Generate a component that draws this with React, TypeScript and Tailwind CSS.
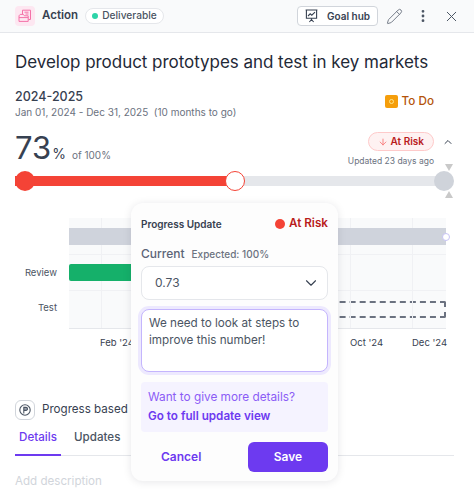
import { ChevronDown, ChevronUp, ArrowDown, Pencil, EllipsisVertical, X } from 'lucide-react';

const FONT = 'font-["Inter",sans-serif]';

function ActionIcon() {
  return (
    <div className="w-5 h-5 rounded bg-[#fde7f1] flex items-center justify-center">
      <svg width="14" height="14" viewBox="0 0 14 14" fill="none" stroke="#f472a8" strokeWidth="1">
        <path d="M4.5 5V1.2h8v9.3h-2" />
        <path d="M6.5 3.2h4M7.5 5h3" />
        <path d="M1 6.8V12.4h9.2V6.8H6.4L5.4 5.4H2.2L1 6.8Z" />
        <path d="M1 8.6h9.2" />
      </svg>
    </div>
  );
}

function HubIcon() {
  return (
    <svg width="13" height="14" viewBox="0 0 13 14" fill="none" stroke="#374151" strokeWidth="1.1">
      <path d="M.6 1h11.8M1.4 1v8.2h10.2V1" />
      <path d="M3 7l2.2-2.2 1.6 1.4L10 3.2" />
      <path d="M6.5 9.2v1.3M4.4 13l2.1-2.5L8.6 13" />
    </svg>
  );
}

function ProgressIcon() {
  return (
    <div className="w-5 h-5 rounded-md border border-[#d1d5db] flex items-center justify-center">
      <svg width="12" height="12" viewBox="0 0 12 12" fill="none" stroke="#4b5563" strokeWidth="1.1">
        <circle cx="6" cy="6" r="5.2" />
        <path d="M4.8 9.6V3.4h2.2a1.5 1.5 0 0 1 0 3H4.8" fill="#9ca3af" />
      </svg>
    </div>
  );
}

function Header() {
  return (
    <div className="h-[33px] bg-[#f9fafb] border-b border-[#e5e7eb] flex items-center pl-[15px] pr-[14px]">
      <ActionIcon />
      <span className="ml-[7px] text-[11.5px] font-semibold text-[#374151]">Action</span>
      <div className="ml-[7px] h-4 w-[79px] justify-center rounded-full border border-[#e5e7eb] bg-white flex items-center gap-[4px]">
        <span className="w-[6px] h-[6px] rounded-full bg-[#2dd4a8]" />
        <span className="text-[10.2px] font-medium text-[#4b5563]">Deliverable</span>
      </div>
      <div className="ml-auto h-5 w-[81px] rounded border border-[#d1d5db] bg-white flex items-center justify-center gap-[9px]">
        <HubIcon />
        <span className="text-[10px] font-semibold text-[#374151]">Goal hub</span>
      </div>
      <Pencil className="ml-2 w-[17px] h-[17px] text-[#6b7280]" strokeWidth={1.3} />
      <EllipsisVertical className="ml-[12px] w-4 h-4 text-[#4b5563]" strokeWidth={2.2} />
      <X className="ml-[12px] w-[17px] h-[17px] text-[#4b5563]" strokeWidth={1.4} />
    </div>
  );
}

function Summary() {
  return (
    <div className="px-[15px]">
      <h1 className="mt-[16px] text-[17px] tracking-[-0.04px] leading-[26px] font-normal text-[#1f2937] whitespace-nowrap">
        Develop product prototypes and test in key markets
      </h1>
      <div className="mt-[14px] flex items-start justify-between">
        <div>
          <div className="text-[12.5px] leading-[15px] font-medium text-[#374151]">2024-2025</div>
          <div className="text-[10px] leading-4 text-[#6b7280] whitespace-pre">Jan 01, 2024 - Dec 31, 2025  (10 months to go)</div>
        </div>
        <div className="mt-[4px] flex items-center gap-1 pr-[25px]">
          <span className="w-[13px] h-[13px] rounded-[2px] bg-[#f59e0b] flex items-center justify-center">
            <span className="w-[5px] h-[5px] rounded-full border border-[#fde68a]" />
          </span>
          <span className="text-[11.7px] font-medium text-[#b45309]">To Do</span>
        </div>
      </div>
      <div className="mt-[7px] flex items-start justify-between">
        <div className="flex items-baseline">
          <span className="text-[31px] leading-[42px] font-normal text-[#374151]">73</span>
          <span className="ml-[1px] text-[14px] text-[#374151]">%</span>
          <span className="ml-[6px] text-[10px] text-[#6b7280]">of 100%</span>
        </div>
        <div className="flex flex-col items-end pr-[25px] relative">
          <div className="mt-[5px] h-[19px] px-[9px] rounded-full border border-[#fecaca] bg-[#fef2f2] flex items-center gap-[3px]">
            <ArrowDown className="w-[10px] h-[10px] text-[#f87171]" strokeWidth={2} />
            <span className="text-[10px] font-semibold text-[#b91c1c]">At Risk</span>
          </div>
          <span className="mt-[4px] text-[8.5px] leading-3 text-[#6b7280]">Updated 23 days ago</span>
          <ChevronUp className="absolute right-[5px] top-[9px] w-[12px] h-[12px] text-[#374151]" strokeWidth={2} />
        </div>
      </div>
    </div>
  );
}

function ProgressBar() {
  return (
    <div className="relative ml-[15px] mr-[30px] mt-[2px] h-5 flex items-center">
      <div className="w-full h-[10px] rounded-full bg-[#e5e7eb]">
        <div className="w-[220px] h-full bg-[#f44336]" />
      </div>
      <span className="absolute left-0 top-0 w-5 h-5 rounded-full bg-[#f44336]" />
      <span className="absolute left-[210px] top-0 w-5 h-5 rounded-full bg-white border border-[#f44336]" />
      <span className="absolute right-[-10px] top-0 w-5 h-5 rounded-full bg-[#cfd3da]" />
      <span className="absolute right-[-9px] top-[-7px] w-0 h-0 border-x-[4px] border-x-transparent border-t-[7px] border-t-[#c9c9c9]" />
      <span className="absolute right-[-9px] bottom-[-7px] w-0 h-0 border-x-[4px] border-x-transparent border-b-[7px] border-b-[#c9c9c9]" />
    </div>
  );
}

function Chart() {
  return (
    <div className="mt-[27px] flex pl-[26px]">
      <div className="w-[43px] flex flex-col pr-[12px] items-end text-[9.5px] text-[#4b5563]">
        <div className="h-[37px]" />
        <div className="h-[36px] flex items-center">Review</div>
        <div className="h-[35px] flex items-center">Test</div>
      </div>
      <div>
        <div className="relative w-[377px] h-[111px] bg-[#f9fafb] border-b border-[#e5e7eb] flex flex-col">
          <div className="absolute left-[32px] top-0 bottom-0 w-px bg-[#f0f1f4]" />
          <div className="absolute left-[281px] top-0 bottom-0 w-px bg-[#f0f1f4]" />
          <div className="absolute left-[343px] top-0 bottom-0 w-px bg-[#f0f1f4]" />
          <div className="h-[37px] border-b border-[#f0f1f4] flex items-center relative">
            <div className="w-full h-[17px] bg-[#cfd3dc]" />
            <span className="absolute right-[-4px] top-[15px] w-[8px] h-[8px] rounded-full bg-white border border-[#c7c3f5]" />
          </div>
          <div className="h-9 border-b border-[#f0f1f4] flex items-center relative">
            <div className="w-[120px] h-[17px] rounded-l-[2px] bg-[#15b06a]" />
          </div>
          <div className="flex-1 flex items-center pl-[120px]">
            <div className="w-full h-[17px] rounded-[2px] border-2 border-dashed border-[#6b7280]" />
          </div>
        </div>
        <div className="relative h-[27px] text-[9.5px] text-[#374151]">
          <span className="absolute left-[31px] top-[7px]">Feb &apos;24</span>
          <span className="absolute left-[281px] top-[7px]">Oct &apos;24</span>
          <span className="absolute left-[343px] top-[7px] whitespace-nowrap">Dec &apos;24</span>
        </div>
      </div>
    </div>
  );
}

function Tabs() {
  return (
    <div className="pl-[15px] pr-[20px]">
      <div className="mt-[44px] flex items-center gap-[7px]">
        <ProgressIcon />
        <span className="text-[11.6px] text-[#374151]">Progress based</span>
      </div>
      <div className="mt-[6px] flex border-b border-[#e5e7eb] h-[30px] text-[11.6px] font-medium">
        <div className="w-[46px] h-[30px] border-b-2 border-[#6d3af0] text-center text-[#6d3af0] leading-[22px]">Details</div>
        <div className="ml-[13px] text-[#4b5563] leading-[22px]">Updates</div>
      </div>
      <div className="mt-[17px] text-[11.6px] text-[#d1d5db]">Add description</div>
    </div>
  );
}

function Popover() {
  return (
    <div className="absolute left-[131px] top-[203px] w-[207px] h-[278px] rounded-xl bg-[#fdfdfd] shadow-[0_1px_8px_rgba(17,24,39,0.10)] px-[10px] pt-[14px]">
      <div className="flex items-center justify-between h-[14px]">
        <span className="text-[10px] font-semibold text-[#374151]">Progress Update</span>
        <div className="flex items-center gap-[4px]">
          <span className="w-[10px] h-[10px] rounded-full bg-[#f44336]" />
          <span className="text-[11.7px] font-semibold text-[#b91c1c]">At Risk</span>
        </div>
      </div>
      <div className="mt-[15px] flex items-baseline gap-[7px]">
        <span className="text-[12px] leading-[15px] font-medium text-[#5b6477]">Current</span>
        <span className="text-[10px] leading-[15px] font-medium text-[#6b7280]">Expected: 100%</span>
      </div>
      <div className="mt-[4px] h-[34px] rounded-lg border border-[#e5e7eb] bg-white flex items-center justify-between pl-[13px] pr-[7px] text-[12px] text-[#4b5563]">
        <span>0.73</span>
        <ChevronDown className="w-[18px] h-[18px] text-[#374151]" strokeWidth={1.5} />
      </div>
      <div className="mt-[9px] h-[63px] rounded-lg border border-[#c4b5fd] bg-white ring-[3px] ring-[#ede9fe] px-[6px] pl-[7px] pt-[5px] text-[11.7px] leading-[17px] text-[#4b5563]">
        We need to look at steps to improve this number!
      </div>
      <div className="mt-[10px] h-[50px] rounded bg-[#f5f3ff] px-[7px] pt-[5px]">
        <div className="text-[11.8px] leading-[20px] text-[#8b5cf6]">Want to give more details?</div>
        <div className="text-[11.7px] leading-[18px] font-semibold text-[#6d3af0]">Go to full update view</div>
      </div>
      <div className="mt-[10px] flex items-center justify-between">
        <span className="ml-[20px] text-[12px] font-semibold text-[#6d3af0]">Cancel</span>
        <div className="w-20 h-[30px] rounded-md bg-[#6d3af0] flex items-center justify-center text-[12px] font-semibold text-white">Save</div>
      </div>
    </div>
  );
}

export default function App() {
  return (
    <div className={`relative w-[474px] h-[489px] overflow-hidden bg-white ${FONT}`}>
      <Header />
      <Summary />
      <ProgressBar />
      <Chart />
      <Tabs />
      <Popover />
    </div>
  );
}
